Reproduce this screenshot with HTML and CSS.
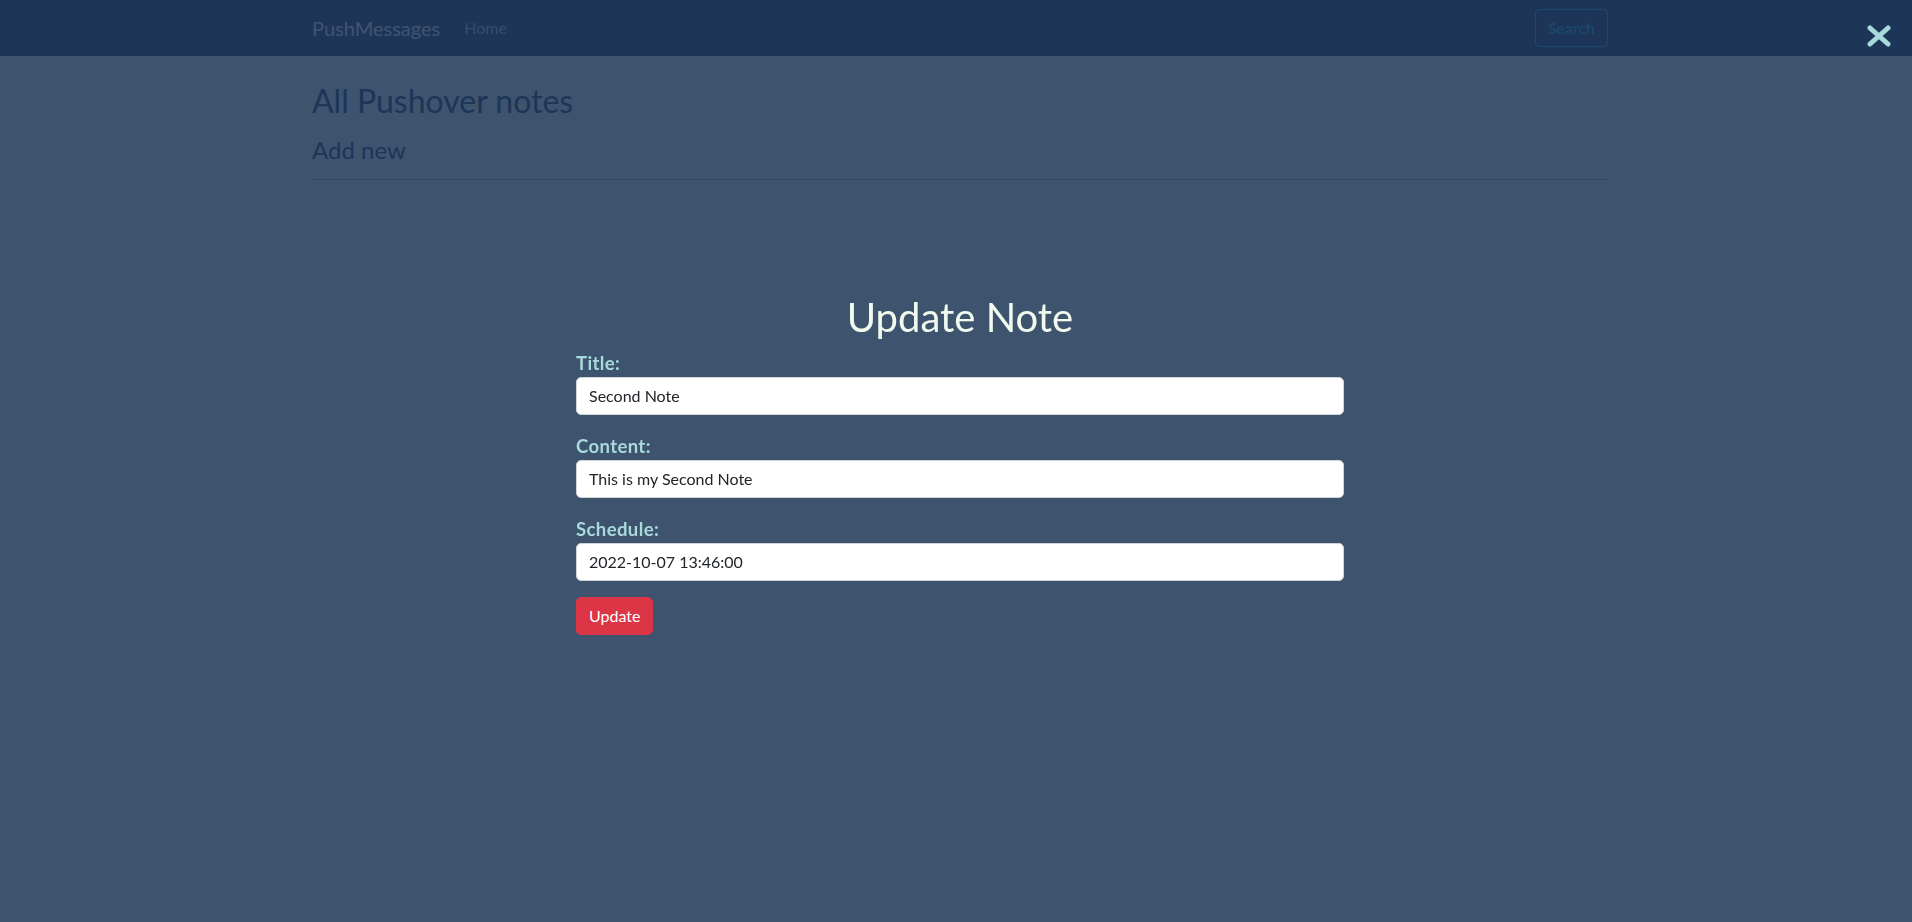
FILE: index.html
```html
<!DOCTYPE html>
<html lang="en">
<head>
<meta charset="utf-8">
<title>PushMessages</title>
<link rel="stylesheet" href="styles.css">
</head>
<body>
<nav class="navbar">
  <div class="container nav-inner">
    <a class="brand" href="#">PushMessages</a>
    <a class="nav-link" href="#">Home</a>
    <form class="search-form">
      <button type="button" class="btn-search">Search</button>
    </form>
  </div>
</nav>
<main class="page">
  <div class="container">
    <h2 class="page-title">All Pushover notes</h2>
    <h4 class="add-new"><a href="#">Add new</a></h4>
    <hr class="divider">
  </div>
</main>
<div class="overlay">
  <button type="button" class="close-btn" aria-label="Close">
    <svg width="24" height="22" viewBox="0 0 24 22"><path d="M3 3 L21 19 M21 3 L3 19" stroke="#a8dadc" stroke-width="5" stroke-linecap="round" fill="none"/></svg>
  </button>
  <div class="modal">
    <h1 class="modal-title">Update Note</h1>
    <form class="note-form">
      <div class="field">
        <label class="field-label" for="title">Title:</label>
        <input class="field-input" id="title" type="text" value="Second Note">
      </div>
      <div class="field">
        <label class="field-label" for="content">Content:</label>
        <input class="field-input" id="content" type="text" value="This is my Second Note">
      </div>
      <div class="field">
        <label class="field-label" for="schedule">Schedule:</label>
        <input class="field-input" id="schedule" type="text" value="2022-10-07 13:46:00">
      </div>
      <button type="button" class="btn-update">Update</button>
    </form>
  </div>
</div>
</body>
</html>
```

FILE: styles.css
```css
* { box-sizing: border-box; }

html, body {
  margin: 0;
  height: 100%;
}

body {
  font-family: Lato, "Open Sans", sans-serif;
  font-size: 16px;
  line-height: 1.5;
  color: #212529;
  background: #f1faee;
}

.container {
  max-width: 1320px;
  margin: 0 auto;
  padding: 0 12px;
}

.navbar {
  background: #1d3557;
  padding: 8px 0 8px 8px;
}

.nav-inner {
  display: flex;
  align-items: center;
}

.brand {
  font-size: 20px;
  line-height: 30px;
  padding: 5px 0;
  margin-right: 16px;
  color: #ffffff;
  text-decoration: none;
}

.nav-link {
  padding: 8px;
  line-height: 24px;
  color: rgba(255, 255, 255, 0.75);
  text-decoration: none;
}

.search-form {
  margin: 0 0 0 auto;
  display: flex;
}

.btn-search {
  font-family: inherit;
  font-size: 16px;
  line-height: 24px;
  padding: 6px 12px;
  height: 38px;
  background: transparent;
  color: #0dcaf0;
  border: 1px solid #0dcaf0;
  border-radius: 5px;
}

.page {
  padding-left: 8px;
}

.page-title {
  margin: 26px 0 16px;
  font-size: 32px;
  font-weight: 400;
  line-height: 1.2;
  color: #1d3557;
}

.add-new {
  margin: 0;
  font-size: 24px;
  font-weight: 400;
  line-height: 1.2;
}

.add-new a {
  color: #1d3557;
  text-decoration: none;
}

.divider {
  margin: 14px 0 0;
  border: 0;
  border-top: 1px solid rgba(29, 53, 87, 0.3);
}

.overlay {
  position: fixed;
  inset: 0;
  background: rgba(29, 53, 87, 0.85);
  display: flex;
  align-items: center;
  justify-content: center;
  padding: 5px 0 0 8px;
}

.close-btn {
  position: absolute;
  top: 25px;
  right: 21px;
  width: 24px;
  height: 22px;
  padding: 0;
  border: 0;
  background: transparent;
  display: flex;
}

.modal {
  width: 768px;
}

.modal-title {
  margin: 0 0 10px;
  font-size: 40px;
  font-weight: 400;
  line-height: 48px;
  text-align: center;
  color: #f1faee;
}

.note-form {
  display: flex;
  flex-direction: column;
  align-items: flex-start;
}

.field {
  width: 100%;
}

.field + .field {
  margin-top: 19px;
}

.field-label {
  display: block;
  font-size: 18.5px;
  font-weight: 700;
  line-height: 24px;
  letter-spacing: 0.4px;
  margin-bottom: 2px;
  color: #a8dadc;
}

.field-input {
  display: block;
  width: 100%;
  height: 38px;
  padding: 6px 12px;
  font-family: inherit;
  font-size: 16px;
  line-height: 24px;
  color: #212529;
  background: #ffffff;
  border: 1px solid #ced4da;
  border-radius: 5px;
}

.btn-update {
  margin-top: 16px;
  height: 38px;
  padding: 6px 12px;
  font-family: inherit;
  font-size: 16px;
  line-height: 24px;
  color: #ffffff;
  background: #dc3545;
  border: 1px solid #dc3545;
  border-radius: 5px;
}
```
